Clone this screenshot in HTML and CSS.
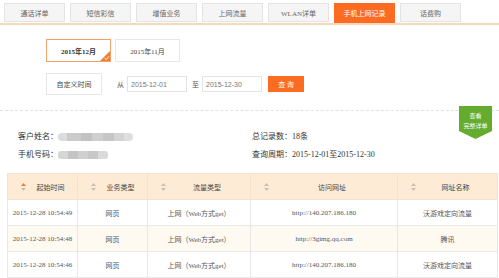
FILE: index.html
```html
<!DOCTYPE html>
<html lang="zh-CN">
<head>
  <meta charset="UTF-8">
  <title>手机上网记录</title>
  <link rel="stylesheet" href="styles.css">
</head>
<body>
  <div class="tabs">
    <a class="tab">通话详单</a>
    <a class="tab">短信彩信</a>
    <a class="tab">增值业务</a>
    <a class="tab">上网流量</a>
    <a class="tab">WLAN详单</a>
    <a class="tab tab--active">手机上网记录</a>
    <a class="tab">话费购</a>
  </div>

  <div class="months">
    <span class="month month--active">2015年12月
      <svg class="month__check" width="10" height="10" viewBox="0 0 10 10"><polygon points="10,0 10,10 0,10" fill="#f47b2f"/><polyline points="4.6,7.2 6.2,8.6 8.8,5.4" fill="none" stroke="#fff" stroke-width="1"/></svg>
    </span>
    <span class="month">2015年11月</span>
  </div>

  <div class="range">
    <span class="range__btn">自定义时间</span>
    <span class="range__label">从</span>
    <span class="range__input">2015-12-01</span>
    <span class="range__label range__label--to">至</span>
    <span class="range__input">2015-12-30</span>
    <span class="range__query">查 询</span>
  </div>

  <div class="info">
    <div class="info__col">
      <p>客户姓名：<span class="blur blur--long"></span></p>
      <p>手机号码：<span class="blur"></span></p>
    </div>
    <div class="info__col info__col--right">
      <p>总记录数：18条</p>
      <p>查询周期：2015-12-01至2015-12-30</p>
    </div>
    <a class="badge">查看<br>完整详单</a>
  </div>

  <table class="records">
    <colgroup>
      <col class="col-time">
      <col class="col-type">
      <col class="col-flow">
      <col class="col-url">
      <col class="col-name">
    </colgroup>
    <thead>
      <tr>
        <th><svg class="sort" width="5" height="8" viewBox="0 0 5 8"><polygon points="2.5,0 5,3 0,3" fill="#f07a35"/><polygon points="0,5 5,5 2.5,8" fill="#c9c0b5"/></svg>起始时间</th>
        <th><svg class="sort" width="5" height="8" viewBox="0 0 5 8"><polygon points="2.5,0 5,3 0,3" fill="#c9c0b5"/><polygon points="0,5 5,5 2.5,8" fill="#c9c0b5"/></svg>业务类型</th>
        <th><svg class="sort" width="5" height="8" viewBox="0 0 5 8"><polygon points="2.5,0 5,3 0,3" fill="#c9c0b5"/><polygon points="0,5 5,5 2.5,8" fill="#c9c0b5"/></svg>流量类型</th>
        <th><svg class="sort" width="5" height="8" viewBox="0 0 5 8"><polygon points="2.5,0 5,3 0,3" fill="#c9c0b5"/><polygon points="0,5 5,5 2.5,8" fill="#c9c0b5"/></svg>访问网址</th>
        <th><svg class="sort" width="5" height="8" viewBox="0 0 5 8"><polygon points="2.5,0 5,3 0,3" fill="#c9c0b5"/><polygon points="0,5 5,5 2.5,8" fill="#c9c0b5"/></svg>网址名称</th>
      </tr>
    </thead>
    <tbody>
      <tr>
        <td>2015-12-28 10:54:49</td>
        <td>网页</td>
        <td>上网（Web方式get）</td>
        <td>http://140.207.186.180</td>
        <td>沃游戏定向流量</td>
      </tr>
      <tr class="alt">
        <td>2015-12-28 10:54:48</td>
        <td>网页</td>
        <td>上网（Web方式get）</td>
        <td>http://3gimg.qq.com</td>
        <td>腾讯</td>
      </tr>
      <tr>
        <td>2015-12-28 10:54:46</td>
        <td>网页</td>
        <td>上网（Web方式get）</td>
        <td>http://140.207.186.180</td>
        <td>沃游戏定向流量</td>
      </tr>
    </tbody>
  </table>
</body>
</html>
```

FILE: styles.css
```css
body {
  margin: 0;
  background: #fff;
  color: #333;
  font-family: "Liberation Serif", "Noto Sans CJK SC", serif;
  font-size: 7px;
}

/* 顶部页签 */
.tabs {
  display: flex;
  align-items: flex-end;
  gap: 5px;
  padding: 3px 0 0 4px;
  border-bottom: 2px solid #f8d8b8;
}
.tab {
  width: 61px;
  height: 19px;
  margin-bottom: 1px;
  box-sizing: border-box;
  background: #f5f5f5;
  border: 1px solid #e4e4e4;
  color: #666;
  display: flex;
  align-items: center;
  justify-content: center;
}
.tab--active {
  height: 20px;
  margin-bottom: 0;
  background: #fb6c22;
  border-color: #fb6c22;
  color: #fff;
}

/* 月份选择 */
.months {
  display: flex;
  gap: 4px;
  margin: 14px 0 0 46px;
}
.month {
  position: relative;
  width: 65px;
  height: 23px;
  box-sizing: border-box;
  border: 1px solid #e6e6e6;
  display: flex;
  align-items: center;
  justify-content: center;
  color: #444;
}
.month--active {
  border-color: #f2a06a;
  font-weight: bold;
  color: #333;
}
.month__check {
  position: absolute;
  right: 0;
  bottom: 0;
}

/* 自定义时间 */
.range {
  display: flex;
  align-items: center;
  margin: 11px 0 0 46px;
}
.range__btn {
  width: 56px;
  height: 22px;
  box-sizing: border-box;
  border: 1px solid #e6e6e6;
  display: flex;
  align-items: center;
  justify-content: center;
  margin-right: 15px;
  color: #444;
}
.range__label {
  margin-right: 3px;
  color: #555;
}
.range__label--to {
  margin-left: 5px;
}
.range__input {
  width: 60px;
  height: 16px;
  box-sizing: border-box;
  border: 1px solid #e4e4e4;
  padding-left: 3px;
  display: flex;
  align-items: center;
  font-family: "Liberation Sans", "Noto Sans CJK SC", sans-serif;
  color: #777;
}
.range__query {
  width: 36px;
  height: 16px;
  margin-left: 6px;
  background: #fb6c22;
  color: #fff;
  display: flex;
  align-items: center;
  justify-content: center;
  white-space: pre;
}

/* 客户信息 */
.info {
  position: relative;
  display: flex;
  margin-top: 15px;
  padding: 17px 0 9px 18px;
  border-top: 1px dashed #e2e2e2;
  font-size: 8px;
}
.info p {
  margin: 0;
  line-height: 18px;
  display: flex;
  align-items: center;
}
.info__col {
  width: 234px;
}
.blur {
  display: inline-block;
  width: 50px;
  height: 8px;
  border-radius: 3px;
  background: linear-gradient(90deg, #d6d6d6 0 20%, #c4c4c4 20% 40%, #d0d0d0 40% 60%, #c8c8c8 60% 80%, #dadada 80%);
}
.blur--long {
  width: 75px;
  border-radius: 4px;
  background: linear-gradient(90deg, #dcdcdc 0 12%, #cbcbcb 12% 30%, #c2c2c2 30% 45%, #cfcfcf 45% 60%, #c6c6c6 60% 75%, #d4d4d4 75% 88%, #dedede 88%);
}
.badge {
  position: absolute;
  top: -5px;
  right: 7px;
  width: 33px;
  height: 33px;
  padding-top: 5px;
  box-sizing: border-box;
  background: #65ab2e;
  color: #fff;
  font-family: "Noto Sans CJK SC", sans-serif;
  font-size: 6px;
  line-height: 10px;
  text-align: center;
  clip-path: polygon(0 0, 100% 0, 100% 76%, 50% 100%, 0 76%);
}

/* 记录表格 */
.records {
  margin-left: 7px;
  width: 490px;
  border-collapse: collapse;
  table-layout: fixed;
  border-top: 1px solid #f6d9bd;
}
.records th,
.records td {
  height: 25px;
  padding: 0;
  border: 1px solid #e8e8e8;
  text-align: center;
  white-space: nowrap;
}
.records th {
  position: relative;
  padding-left: 16px;
  background: #fdebd5;
  font-weight: normal;
  color: #444;
  border-color: #f3e2cf;
}
.records td {
  color: #555;
}
.records tr.alt td {
  background: #fffaf1;
}
.sort {
  position: absolute;
  left: 13px;
  top: 9px;
}
.col-time { width: 70px; }
.col-type { width: 70px; }
.col-flow { width: 103px; }
.col-url { width: 147px; }
.col-name { width: 100px; }
```
